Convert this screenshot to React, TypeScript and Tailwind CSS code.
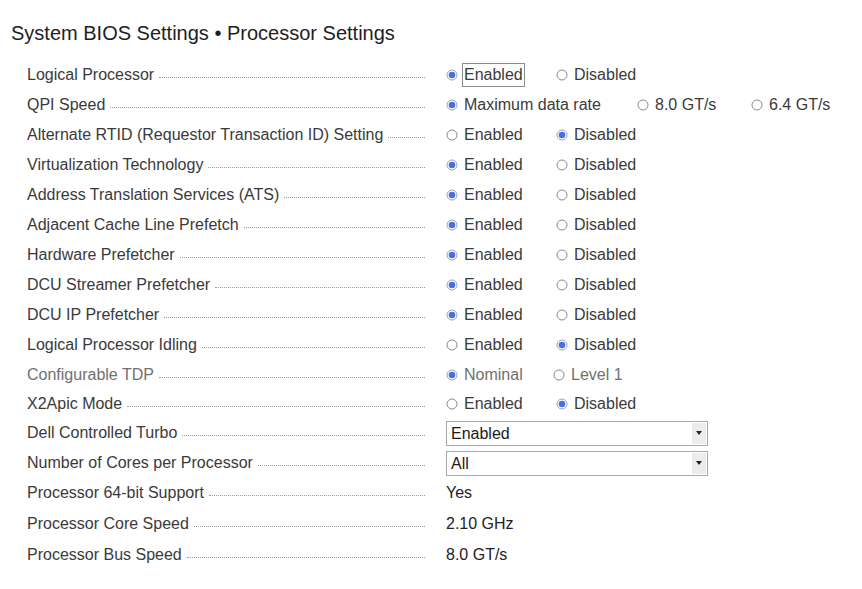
type Option = { label: string; checked?: boolean; at?: number };

type Row =
  | { kind: "radio"; label: string; options: Option[]; muted?: boolean; focus?: boolean }
  | { kind: "select"; label: string; value: string }
  | { kind: "text"; label: string; value: string };

const rows: Row[] = [
  { kind: "radio", label: "Logical Processor", focus: true, options: [{ label: "Enabled", checked: true }, { label: "Disabled" }] },
  {
    kind: "radio",
    label: "QPI Speed",
    options: [
      { label: "Maximum data rate", checked: true },
      { label: "8.0 GT/s", at: 191 },
      { label: "6.4 GT/s", at: 305 },
    ],
  },
  { kind: "radio", label: "Alternate RTID (Requestor Transaction ID) Setting", options: [{ label: "Enabled" }, { label: "Disabled", checked: true }] },
  { kind: "radio", label: "Virtualization Technology", options: [{ label: "Enabled", checked: true }, { label: "Disabled" }] },
  { kind: "radio", label: "Address Translation Services (ATS)", options: [{ label: "Enabled", checked: true }, { label: "Disabled" }] },
  { kind: "radio", label: "Adjacent Cache Line Prefetch", options: [{ label: "Enabled", checked: true }, { label: "Disabled" }] },
  { kind: "radio", label: "Hardware Prefetcher", options: [{ label: "Enabled", checked: true }, { label: "Disabled" }] },
  { kind: "radio", label: "DCU Streamer Prefetcher", options: [{ label: "Enabled", checked: true }, { label: "Disabled" }] },
  { kind: "radio", label: "DCU IP Prefetcher", options: [{ label: "Enabled", checked: true }, { label: "Disabled" }] },
  { kind: "radio", label: "Logical Processor Idling", options: [{ label: "Enabled" }, { label: "Disabled", checked: true }] },
  {
    kind: "radio",
    label: "Configurable TDP",
    muted: true,
    options: [{ label: "Nominal", checked: true }, { label: "Level 1", at: 107 }],
  },
  { kind: "radio", label: "X2Apic Mode", options: [{ label: "Enabled" }, { label: "Disabled", checked: true }] },
  { kind: "select", label: "Dell Controlled Turbo", value: "Enabled" },
  { kind: "select", label: "Number of Cores per Processor", value: "All" },
  { kind: "text", label: "Processor 64-bit Support", value: "Yes" },
  { kind: "text", label: "Processor Core Speed", value: "2.10 GHz" },
  { kind: "text", label: "Processor Bus Speed", value: "8.0 GT/s" },
];

// row heights, the page drifts a pixel here and there
const heights = [
  "h-[30px]", "h-[30px]", "h-[30px]", "h-[30px]", "h-[30px]", "h-[30px]", "h-[30px]", "h-[30px]", "h-[30px]",
  "h-[30px]", "h-[29px]", "h-[29px]", "h-[30px]", "h-[30px]", "h-[30px]", "h-[31px]", "h-[31px]",
];

function Radio({ checked }: { checked?: boolean }) {
  return (
    <svg width="12" height="12" viewBox="0 0 12 12" className="shrink-0">
      <circle cx="6" cy="6" r="5" fill="#fff" stroke={checked ? "#9aa3b3" : "#8a8a8a"} strokeWidth="1" />
      {checked && <circle cx="6" cy="6" r="3.3" fill="#4a6ee0" />}
    </svg>
  );
}

function RadioGroup({ options, focus }: { options: Option[]; focus?: boolean }) {
  return (
    <div className="relative h-full w-[400px]">
      {options.map((o, i) => (
        <div
          key={o.label}
          className="absolute top-0 flex h-full items-center"
          style={{ left: o.at ?? i * 110 }}
        >
          <Radio checked={o.checked} />
          <span
            className={`ml-[4px] px-[1px] leading-[22px] ${
              focus && i === 0 ? "border border-[#8c8c8c]" : "border border-transparent"
            }`}
          >
            {o.label}
          </span>
        </div>
      ))}
    </div>
  );
}

function Select({ value }: { value: string }) {
  return (
    <div className="flex h-[25px] w-[262px] items-stretch border border-[#a9a9a9] bg-white">
      <span className="flex-1 pl-[4px] leading-[23px] text-[#1a1a1a]">{value}</span>
      <div className="m-[1px] flex w-[14px] items-center justify-center bg-[#ececec]">
        <svg width="6" height="4" viewBox="0 0 6 4">
          <path d="M0 0h6L3 4z" fill="#222" />
        </svg>
      </div>
    </div>
  );
}

export default function App() {
  return (
    <div
      className="min-h-[589px] w-[862px] bg-white pl-[11px] pt-[19px] text-[16px] text-[#3a3a3a]"
      style={{ fontFamily: '"Liberation Sans", Arial, sans-serif' }}
    >
      <h1 className="text-[20px] leading-[28px] text-[#1e1e1e]">System BIOS Settings • Processor Settings</h1>
      <div className="mt-[13px] pl-[16px]">
        {rows.map((r, idx) => (
          <div
            key={r.label}
            className={`flex items-center ${heights[idx]} ${
              r.kind === "radio" && r.muted ? "text-[#707070]" : ""
            }`}
          >
            <div className="flex w-[398px] shrink-0 items-center">
              <span className="whitespace-nowrap">{r.label}</span>
              <span className="ml-[5px] mt-[5px] h-0 flex-1 border-b border-dotted border-[#9a9a9a]" />
            </div>
            <div className="ml-[21px] flex h-full items-center">
              {r.kind === "radio" && <RadioGroup options={r.options} focus={r.focus} />}
              {r.kind === "select" && <Select value={r.value} />}
              {r.kind === "text" && <span className="text-[#222]">{r.value}</span>}
            </div>
          </div>
        ))}
      </div>
    </div>
  );
}
